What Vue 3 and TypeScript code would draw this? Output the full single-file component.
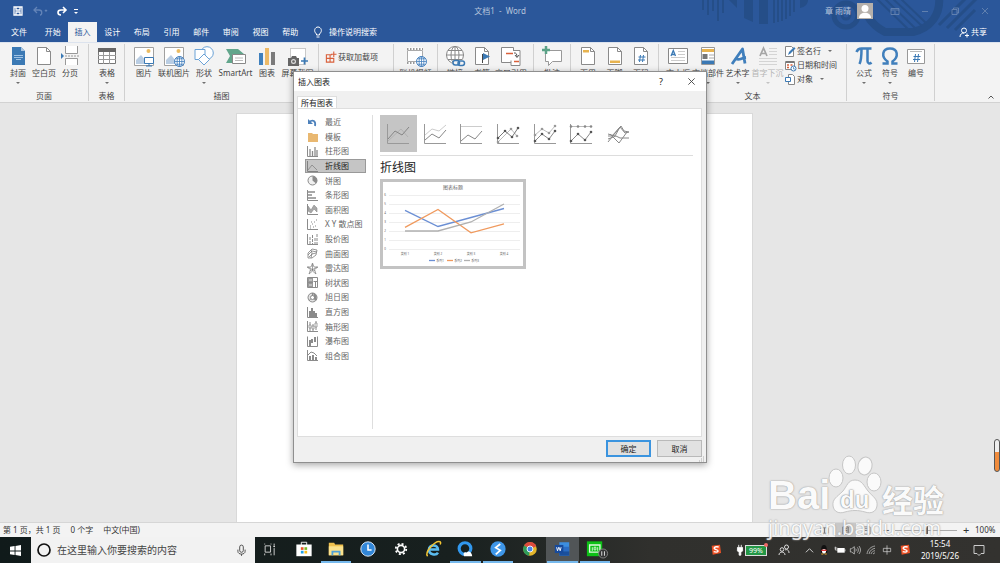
<script setup lang="ts">
import { ref } from 'vue'

interface Tool {
  icon: string
  label: string
  width: number
  arrow?: boolean
  disabled?: boolean
}
interface Group {
  width: number
  title: string
  tools: Tool[]
  kind?: 'addins' | 'text' | 'art'
}

const tabs = ['开始', '插入', '设计', '布局', '引用', '邮件', '审阅', '视图', '帮助']
const activeTab = ref('插入')

const groups: Group[] = [
  { width: 84, title: '页面', tools: [
    { icon: 'cover', label: '封面', width: 26, arrow: true },
    { icon: 'blank', label: '空白页', width: 26 },
    { icon: 'pagebreak', label: '分页', width: 26 },
  ] },
  { width: 36, title: '表格', tools: [{ icon: 'table', label: '表格', width: 36, arrow: true }] },
  { width: 194, title: '插图', kind: 'art', tools: [
    { icon: 'picture', label: '图片', width: 30 },
    { icon: 'online', label: '联机图片', width: 30 },
    { icon: 'shapes', label: '形状', width: 30, arrow: true },
    { icon: 'smartart', label: 'SmartArt', width: 33 },
    { icon: 'chart', label: '图表', width: 30 },
    { icon: 'screenshot', label: '屏幕截图', width: 31, arrow: true },
  ] },
  { width: 75, title: '加载项', kind: 'addins', tools: [] },
  { width: 44, title: '媒体', tools: [{ icon: 'video', label: '联机视频', width: 43 }] },
  { width: 96, title: '链接', tools: [
    { icon: 'link', label: '链接', width: 34 },
    { icon: 'bookmark', label: '书签', width: 20 },
    { icon: 'crossref', label: '交叉引用', width: 38 },
  ] },
  { width: 37, title: '批注', tools: [{ icon: 'comment', label: '批注', width: 36 }] },
  { width: 88, title: '页眉和页脚', tools: [
    { icon: 'header', label: '页眉', width: 26, arrow: true },
    { icon: 'footer', label: '页脚', width: 27, arrow: true },
    { icon: 'pagenum', label: '页码', width: 26, arrow: true },
  ] },
  { width: 188, title: '文本', kind: 'text', tools: [
    { icon: 'textbox', label: '文本框', width: 30, arrow: true },
    { icon: 'parts', label: '文档部件', width: 30, arrow: true },
    { icon: 'wordart', label: '艺术字', width: 29, arrow: true },
    { icon: 'dropcap', label: '首字下沉', width: 31, arrow: true, disabled: true },
  ] },
  { width: 88, title: '符号', tools: [
    { icon: 'pi', label: '公式', width: 26, arrow: true },
    { icon: 'omega', label: '符号', width: 26, arrow: true },
    { icon: 'number', label: '编号', width: 26 },
  ] },
]

const textTools = [
  { icon: 'sign', label: '签名行', arrow: true },
  { icon: 'date', label: '日期和时间', arrow: false },
  { icon: 'object', label: '对象', arrow: true },
]

const pageShape = '<path d="M3.500 1.500h9l4 4v13h-13z" fill="#fff" stroke="#8a8a8a"/><path d="M12.500 1.500v4h4" fill="none" stroke="#8a8a8a"/>'
const photo = '<path d="M.5 1.500h19v18H.5z" fill="#fff" stroke="#a0a0a0"/><circle cx="14.500" cy="5" r="2" fill="#ebbc62"/><path d="M2 18v-4l5-5 5 6v3z" fill="#b9cde3"/>'
const globe = '<circle cx="15.500" cy="15.500" r="5" fill="#fff" stroke="#4480be"/><path d="M10.500 15.500h10M15.500 10.500v10M11.500 12.800h8M11.500 18.200h8" stroke="#4480be" stroke-width=".8"/><ellipse cx="15.500" cy="15.500" rx="2.400" ry="5" fill="none" stroke="#4480be" stroke-width=".8"/>'

const ribbonIcons: Record<string, string> = {
  cover: '<path d="M4 1h9l4 4v14H4z" fill="#3b79b4"/><path d="M13 1v4h4z" fill="#a9c5e0"/><path d="M6 9.500h9M6 11.500h9M8 13.500h5" stroke="#9fc2e4"/>',
  blank: pageShape,
  pagebreak: '<path d="M5.500 0v7.500h12V0M5.500 19v-6.500h12V19" fill="#fff" stroke="#999"/><path d="M5 10h14" stroke="#999" stroke-dasharray="2 1"/><path d="M1 7l3 3-3 3z" fill="#3b79b4"/>',
  table: '<path d="M1.500 2.500h17v15h-17z" fill="#fff" stroke="#777"/><path d="M1 2h18v4H1z" fill="#666"/><path d="M1 9.500h18M1 13.500h18M6.500 6v12M12.500 6v12" stroke="#999"/>',
  picture: photo + '<path d="M10.500 11.500h9v6h-9z" fill="#fff" stroke="#3b79b4"/><path d="M15 18v2M12 20h6" stroke="#3b79b4"/>',
  online: photo + globe,
  shapes: '<circle cx="13" cy="7" r="6.300" fill="#fff" stroke="#6ba2d6"/><path d="M1 3.500h10v10H1z" fill="#fff" stroke="#6ba2d6"/><path d="M10 8l5.500 5.500L10 19l-5.500-5.500z" fill="#fff" stroke="#6ba2d6"/>',
  smartart: '<path d="M0 3h12l6 5-6 5v4H0l4-7z" fill="#62a68c"/><path d="M6.500 8.500h13v9h-13z" fill="#fff" stroke="#888"/><path d="M9 12h8M9 14.500h8" stroke="#bbb"/>',
  chart: '<path d="M2 7h4v12H2z" fill="#3f80bd"/><path d="M8 2h4v17H8z" fill="#edba67"/><path d="M14 6h4v13h-4z" fill="#7b7b7b"/>',
  screenshot: '<path d="M2.500 2.500h15v16h-15z" fill="#fff" stroke="#999" stroke-dasharray="1 1"/><path d="M0 12h3l1-2h4l1 2h2v8H0z" fill="#666"/><circle cx="5.500" cy="15.500" r="2.500" fill="#ddd"/><circle cx="5.500" cy="15.500" r="1.300" fill="#666"/><path d="M13 15h7M16.500 11.500v7" stroke="#3b79b4" stroke-width="1.700"/>',
  addin: '<path d="M1.500 4.500h4v4h-4zM1.500 8.500h4v4h-4zM5.500 8.500h4v4h-4zM5.500 8.500v-4h2M9.500 1v6M6.500 4h6" fill="none" stroke="#d9603b" stroke-width="1.200"/>',
  video: '<path d="M1 1.500h16v17H1z" fill="#fff"/><path d="M1.500 4.500h15v11h-15z" fill="none" stroke="#aaa"/><path d="M1 3h16M1 17h9" stroke="#777" stroke-width="1.500" stroke-dasharray="1.500 1.500"/>' + globe,
  link: '<circle cx="10" cy="9" r="8.500" fill="#fff" stroke="#888"/><ellipse cx="10" cy="9" rx="4" ry="8.500" fill="none" stroke="#888"/><path d="M1.500 9h17M10 .5v17M3 4.500h14M3 13.500h14" stroke="#888"/><path d="M8 14h12v6H8z" fill="#f3f3f3"/><rect x="8" y="14.500" width="6.500" height="4.500" rx="2.200" fill="none" stroke="#3b79b4" stroke-width="1.500"/><rect x="13" y="15" width="6.500" height="4.500" rx="2.200" fill="none" stroke="#3b79b4" stroke-width="1.500"/>',
  bookmark: pageShape + '<path d="M10.500 8v9" stroke="#444"/><path d="M11 7l7 3.500-7 3.500z" fill="#3b79b4"/>',
  crossref: '<path d="M.5 1.500h12v15H.5z" fill="#fff" stroke="#888"/><path d="M12 4.500h7v15h-9v-5" fill="#fff" stroke="#888"/><path d="M5 7.500h7M13 15.500h5" stroke="#d9603b" stroke-width="1.500"/><path d="M13 7c2-.5 3 1 3 4M14 9l2 2.500L18 9" fill="none" stroke="#555"/>',
  comment: '<path d="M3.500 4.500h16v11h-9l-4 4v-4h-3z" fill="#fff" stroke="#999"/><path d="M0 4h8M4 0v8" stroke="#5ba287" stroke-width="2.500"/>',
  header: pageShape + '<path d="M5 4h6v2.500H5z" fill="#e7b34f"/>',
  footer: pageShape + '<path d="M5 14.500h10V17H5z" fill="#e7b34f"/>',
  pagenum: pageShape + '<path d="M9.500 9l-1 7M12.500 9l-1 7M7.500 11h7M7 14h7" stroke="#3b79b4"/>',
  textbox: '<path d="M.5 2.500h19v15H.5z" fill="#fff" stroke="#888"/><path d="M3 10l2.300-5.500L7.500 10M4 8.500h3" fill="none" stroke="#3b79b4" stroke-width="1.300"/><path d="M10 5.500h7M10 8.500h7M3 11.500h14M3 14.500h14" stroke="#ccc"/>',
  parts: '<path d="M3.500 1.500h13v17h-13z" fill="#fff" stroke="#999"/><path d="M4 3h12v3H4z" fill="#e7b34f"/><path d="M4.500 8h5v5h-5z" fill="#777"/><path d="M11 9h5M11 12h5" stroke="#aaa"/><path d="M4 14.500h12V18H4z" fill="#3b79b4"/>',
  wordart: '<path d="M4 18L14.500 3l2.500 14.500M8 13c4 1.500 5-1 10-1.500" fill="none" stroke="#407fbc" stroke-width="2.800" stroke-linejoin="round"/>',
  dropcap: '<path d="M2 10l3.500-8L9 10M3.500 7.500h4" fill="none" stroke="#a5a5a5" stroke-width="1.700"/><path d="M11 2.500h8M11 5.500h8M11 8.500h8M1 12.500h18M1 15.500h18M1 18.500h18" stroke="#d4d4d4"/>',
  pi: '<path d="M2.500 6c1-3 3-3.500 5-3.500h10M7.500 3c0 7 0 11-2 15M13.500 3v12c0 3 2.500 3 4 1.500" fill="none" stroke="#407fbc" stroke-width="2.500"/>',
  omega: '<path d="M2.500 17.500h5v-2C1 11 2 2.500 10 2.500s9 8.500 2.500 13v2h5" fill="none" stroke="#407fbc" stroke-width="2.500"/>',
  number: '<path d="M1.500 3.500h17v14h-17z" fill="#fff" stroke="#999"/><path d="M4 5.500h12" stroke="#bbb"/><path d="M9.500 8l-1 8M12.500 8l-1 8M7.500 10.500h7M7 13.500h7" stroke="#3b79b4"/>',
  sign: '<path d="M.5.500h6l2 2v8h-8z" fill="#fff" stroke="#888"/><path d="M3 9l1-3 5-5 1.500 1.500-5 5z" fill="#3b79b4"/>',
  date: '<path d="M.5 1.500h9v8h-9z" fill="#fff" stroke="#888"/><path d="M1 1h8v2H1z" fill="#777"/><path d="M2 5h2M2 7.500h2M5.500 5h2" stroke="#d9603b" stroke-width="1.500"/><circle cx="8.500" cy="8.500" r="2.500" fill="#fff" stroke="#3b79b4"/><path d="M8.500 7v2H10" fill="none" stroke="#3b79b4" stroke-width=".7"/>',
  object: '<path d="M3.500.500h4l2 2v8h-6z" fill="#fff" stroke="#888"/><path d="M.5 3.500h5v4h-5z" fill="#fff" stroke="#3b79b4"/>',
}

const axes = '<path d="M.5 0v10.500H11" fill="none" stroke="#777"/>'
const chartTypes = [
  { name: '最近', art: '<path d="M2 5c4-3 7-1 6 4" fill="none" stroke="#2f6cb0" stroke-width="1.800"/><path d="M1 2v5h5z" fill="#2f6cb0"/>' },
  { name: '模板', art: '<path d="M1 2h4l1 1h5v8H1z" fill="#e5ac58"/>' },
  { name: '柱形图', art: axes + '<path d="M3 10V3M5.500 10V5M8 10V1M10 10V4" stroke="#777" stroke-width="1.300"/>' },
  { name: '折线图', art: axes + '<path d="M1 9l4-5 5 5" fill="none" stroke="#888"/>' },
  { name: '饼图', art: '<circle cx="5.500" cy="5.500" r="4.500" fill="#eee" stroke="#777"/><path d="M5.500 1v4.500l3.500 3A4.500 4.500 0 0 0 5.500 1z" fill="#777"/>' },
  { name: '条形图', art: axes + '<path d="M1 2h7M1 5h4M1 8h8" stroke="#777" stroke-width="1.700"/>' },
  { name: '面积图', art: axes + '<path d="M1 7V2l3 4 3-5 3 3v4L7 5 4 9z" fill="#999" stroke="#777" stroke-width=".6"/>' },
  { name: 'X Y 散点图', art: axes + '<path d="M3 7h1M5 5h1M7 3h1M4 3h1M8 7h1M6 8h1M9 1h1M3 9h1" stroke="#777"/>' },
  { name: '股价图', art: axes + '<path d="M3 3v7M5.500 1v9M8 4v6M10 0v10" stroke="#777" stroke-dasharray="3 1"/>' },
  { name: '曲面图', art: '<path d="M1 5l4-4 5 1-1 5-4 3H1zM1 7l4-4 5 1M2 9l3-3 4-1M4 2l1 3-1 5" fill="none" stroke="#777" stroke-width=".9"/>' },
  { name: '雷达图', art: '<path d="M5.500 0L7 4h4L7.500 6.500 9 11 5.500 8 2 11l1.500-4.500L0 4h4zM5.500 1v7M1 4l7 4M10 4L3 8" fill="none" stroke="#777" stroke-width=".8"/>' },
  { name: '树状图', art: '<path d="M.5.500h10v10H.5z" fill="#fff" stroke="#777"/><path d="M1 1h5v9H1z" fill="#888"/><path d="M6.500 4.500h4M8.500 5v5M1 5.500h5" stroke="#777"/><path d="M2 3h3M2 8h3" stroke="#ddd"/>' },
  { name: '旭日图', art: '<circle cx="5.500" cy="5.500" r="4.500" fill="#ddd" stroke="#777"/><circle cx="5.500" cy="5.500" r="2" fill="#fff" stroke="#777"/><path d="M5.500 1v3M7 6l3 2M3.500 7L2 9" stroke="#777"/><path d="M6 1a4.500 4.500 0 0 1 2 8L7 7V4z" fill="#777"/>' },
  { name: '直方图', art: axes + '<path d="M2 10V4h2V1h2v3h2v2h2v4z" fill="#777"/>' },
  { name: '箱形图', art: axes + '<path d="M3 1v9M6 3v7M9 0v9" stroke="#777"/><path d="M2 4h2v3H2zM5 5h2v3H5zM8 2h2v4H8z" fill="#fff" stroke="#777" stroke-width=".8"/>' },
  { name: '瀑布图', art: '<path d="M.5.500v10h10V.500" fill="none" stroke="#777"/><path d="M2 4h2v6H2zM4 3h2v4H4zM7 1h2v5H7z" fill="#777"/>' },
  { name: '组合图', art: axes + '<path d="M2 10V6h2v4zM5 10V5h2v5zM8 10V7h2v3z" fill="#777"/><path d="M1 5l3-3 3 1 3 3" fill="none" stroke="#777"/>' },
]
const activeType = ref('折线图')

const subAxes = '<path d="M.5 0v19.500H22" fill="none" stroke="#999"/>'
const dots = (points: number[][], fill: string) =>
  points.map(([x, y]) => `<circle cx="${x}" cy="${y}" r="1.300" fill="${fill}"/>`).join('')
const subTypes = [
  { name: '折线图', art: subAxes + '<path d="M1 17L14 5l7 8" fill="none" stroke="#b2b2b2"/><path d="M1 15l7-8 7 4 7-8" fill="none" stroke="#858585"/>' },
  { name: '堆积折线图', art: subAxes + '<path d="M1 11l7-6 7 2 7-6" fill="none" stroke="#ccc"/><path d="M1 16l7-6 7 4 7-8" fill="none" stroke="#888"/>' },
  { name: '百分比堆积折线图', art: subAxes + '<path d="M1 2.500h21" stroke="#ccc"/><path d="M1 17l7-6 7 4 7-8" fill="none" stroke="#888"/>' },
  { name: '带数据标记的折线图', art: subAxes + '<path d="M1 18L14 5l6 7" fill="none" stroke="#bbb"/><path d="M1 14l7-7 7 6 6-9" fill="none" stroke="#777"/>' + dots([[1, 18], [14, 5], [20, 12]], '#999') + dots([[1, 14], [8, 7], [15, 13], [21, 4]], '#555') },
  { name: '带标记的堆积折线图', art: subAxes + '<path d="M1 11l7-6 7 4 6-7" fill="none" stroke="#bbb"/><path d="M1 17l7-7 7 5 6-8" fill="none" stroke="#888"/>' + dots([[1, 11], [8, 5], [15, 9], [21, 2]], '#999') + dots([[1, 17], [8, 10], [15, 15], [21, 7]], '#555') },
  { name: '带标记的百分比堆积折线图', art: subAxes + '<path d="M1 2.500h20" stroke="#bbb"/><path d="M1 17l7-7 7 6 6-8" fill="none" stroke="#888"/>' + dots([[1, 2.5], [8, 2.5], [15, 2.5], [21, 2.5]], '#888') + dots([[1, 17], [8, 10], [15, 16], [21, 8]], '#555') },
  { name: '三维折线图', art: '<path d="M1 12h4L14 2l3 5 5 1M1 10l7 2 5-9 5 6 4-1M1 18L13 3M3 10l9 9 8-11M1 15l8-3 4 2h9" fill="none" stroke="#888"/>' },
]
const activeSub = ref(0)

const gridLines = [6, 5, 4, 3, 2, 1, 0].map((value, i) => ({ value, y: 14 + i * 9 }))
const categories = ['类别 1', '类别 2', '类别 3', '类别 4'].map((name, i) => ({ name, x: 23 + i * 33 }))
const toPoints = (values: number[]) => values.map((v, i) => `${23 + i * 33},${68 - v * 9}`).join(' ')
const series = [
  { name: '系列1', color: '#6b8fd4', points: toPoints([4.3, 2.5, 3.5, 4.5]), x: 47 },
  { name: '系列2', color: '#f09a5e', points: toPoints([2.4, 4.4, 1.8, 2.8]), x: 65 },
  { name: '系列3', color: '#b0b0b0', points: toPoints([2, 2, 3, 5]), x: 82 },
]

const winApps = [
  { name: '任务视图', art: '<path d="M3.500 6.500h6v7h-6zM3 4v1M10 4v1M3 15v2M10 15v2M13.500 4v2M13.500 9v8" fill="none" stroke="#ddd"/><circle cx="13.500" cy="7" r="1" fill="#ddd"/>' },
  { name: '应用商店', art: '<path d="M7 6V2.500h6V6" fill="none" stroke="#fff"/><path d="M1.500 5h17v13h-17z" fill="#fff"/><path d="M6.500 8h3v3h-3z" fill="#e8562a"/><path d="M10.500 8h3v3h-3z" fill="#79b928"/><path d="M6.500 12h3v3h-3z" fill="#1e9fe8"/><path d="M10.500 12h3v3h-3z" fill="#f8bc19"/>' },
  { name: '文件资源管理器', open: true, art: '<path d="M2 3h6l1 2h9v12H2z" fill="#f0c14e"/><path d="M2 7h16v10H2z" fill="#fbe28d"/><path d="M5 17v-5h10v5h-2v-3H7v3z" fill="#4da0d8"/>' },
  { name: '时钟', art: '<circle cx="10" cy="10" r="8" fill="#3287d8" stroke="#e6f2ff"/><path d="M10 5v6h4" fill="none" stroke="#fff" stroke-width="1.700"/>' },
  { name: '设置', art: '<circle cx="10" cy="10" r="4" fill="none" stroke="#fff" stroke-width="1.800"/><circle cx="10" cy="10" r="5.800" fill="none" stroke="#fff" stroke-width="2" stroke-dasharray="2.250 2.300"/>' },
  { name: 'Internet Explorer', art: '<path d="M15.500 14c-2 3.500-10 2.500-10-3.500s10-6 10 0h-9" fill="none" stroke="#5bbcf0" stroke-width="2.800"/><path d="M4 18C0 14 13-.5 18 2c1 .7.500 2 0 3" fill="none" stroke="#f5c632" stroke-width="1.700"/>' },
  { name: 'QQ 浏览器', open: true, art: '<circle cx="10" cy="9.500" r="6.500" fill="#16201f" stroke="#3198ee" stroke-width="3.500"/><path d="M9 18c-2-5 2-5 3-4 2-3 6 0 6 4z" fill="#fff"/>' },
  { name: '迅雷', open: true, art: '<circle cx="10" cy="10" r="8.500" fill="#3e96e8"/><path d="M12.500 4.500L7.500 8.500l5 3-5 4.500" fill="none" stroke="#fff" stroke-width="2"/>' },
  { name: 'Chrome', art: '<circle cx="10" cy="10" r="7.500" fill="#e3b52b"/><path d="M10 10L3.500 6.200A7.500 7.500 0 0 1 17 7z" fill="#dd4b3e"/><path d="M10 10L3.500 6.200A7.500 7.500 0 0 0 9 17.500z" fill="#2f9c5a"/><circle cx="10" cy="10" r="3.300" fill="#4685e8" stroke="#fff"/>' },
  { name: 'Word', open: true, active: true, art: '<path d="M7 2.500h11v15H7z" fill="#3c8ee0"/><path d="M7 7.500h11v5H7z" fill="#2b6dc5"/><path d="M7 12.500h11v5H7z" fill="#1b4f9b"/><path d="M2 5.500h9.500v9H2z" fill="#174a9c"/><path d="M4 8l1 4 1.500-4L8 12l1-4" fill="none" stroke="#fff" stroke-width="1"/>' },
  { name: '爱奇艺', open: true, art: '<path d="M1 1.500h17v16.500H1z" fill="#0dc116"/><path d="M4 5.500h11.500v8H4z" fill="none" stroke="#dff8df" stroke-width="1.500"/><path d="M7 8v4M9 8h2v3H9zM13 8v4" fill="none" stroke="#dff8df"/><circle cx="19" cy="15" r="5" fill="#333" stroke="#888"/><path d="M17.500 12.500v5M20.500 12.500v5" stroke="#eee"/>' },
]
const sogou = '<path d="M2.500 2.500L15 1l1.500 12.500L4 16z" fill="#ee5226"/><path d="M13 4.500C6 3 4 7 9 8.300s4 5-3.500 3.200" fill="none" stroke="#fff" stroke-width="2"/>'
const tray = [
  { name: 'QQ', width: 16, art: '<ellipse cx="9" cy="7" rx="4" ry="5.500" fill="#111"/><ellipse cx="9" cy="10" rx="5" ry="4.500" fill="#111"/><ellipse cx="9" cy="11" rx="3" ry="3.500" fill="#fff"/><path d="M5 8.500h8v2H5z" fill="#df3535"/><path d="M5 15h3M10 15h3" stroke="#f5ae28" stroke-width="1.500"/>' },
  { name: '电源', width: 15, art: '<path d="M5 6h11v7H5z" fill="#fff"/><path d="M2 4v5h4M1 6h4M16.500 8v3" fill="none" stroke="#fff"/>' },
  { name: '音量', width: 16, art: '<path d="M2 7h2l4-3v11l-4-3H2z" fill="none" stroke="#ddd"/><path d="M10 7c1 1 1 3 0 4M12.500 5c2 2 2 6 0 8M15 3c3 4 3 8 0 12" fill="none" stroke="#ddd"/>' },
  { name: '网络', width: 16, art: '<path d="M3 15C4 8 9 4 15 3M6 15c1-5 5-8 9-8.500M9 15c1-3 3-4.500 6-5M12 15l3-2" fill="none" stroke="#bbb" stroke-width="1.200"/>' },
  { name: '输入法', width: 15, art: '<path d="M3.500 6.500h11v5h-11zM9 2v14" fill="none" stroke="#ddd"/>' },
]
</script>

<template>
  <div class="desktop">
    <header class="titlebar">
      <svg class="art" viewBox="0 0 310 42" aria-hidden="true">
        <g fill="none" stroke="#254e88" stroke-width="2">
          <path d="M13 0v10M18 0v15M23 0v11M28 0v21M33 0v13" />
          <path d="M39 0h8v8zM54 0h9v22l-9-4zM69 0h9v24h-9z" fill="#254e88" stroke="none" />
          <path d="M84 0v23M88 0v22M92 0v21M96 0v19M100 0v16M104 0v12" />
          <path d="M110 0h8c0 4-3 7-8 8z" fill="#254e88" stroke="none" />
          <circle cx="156" cy="15" r="12" stroke-width="5" />
          <circle cx="156" cy="15" r="4" stroke-width="3" />
          <path d="M249-4c2 18-8 32-26 36h-28c-8-4-14-10-18-17" stroke-width="8" />
          <path d="M186-2l33 32M194-2l32 31M202-2l30 28M210-2l26 25" />
          <path d="M249 25L277-3M257 28l30-30M265 30l20-20" stroke-width="3" />
        </g>
      </svg>
      <div class="caption">
        <div class="quick">
          <button type="button" aria-label="保存"><svg viewBox="0 0 10 10"><path d="M1 1h8v8H1zM3 1v3h4V1M3 9V6h4v3" fill="none" stroke="#fff" stroke-width="1.300" /></svg></button>
          <button type="button" class="dim" aria-label="撤消"><svg viewBox="0 0 14 10"><path d="M4 1L1 4l3 3M1 4h5c4 0 3 5 1 5M12 4l1 1 1-1" fill="none" stroke="#6384b8" stroke-width="1.300" /></svg></button>
          <button type="button" aria-label="恢复"><svg viewBox="0 0 10 10"><path d="M6 1l3 3-3 3M9 4H4C0 4 0 9 4 9" fill="none" stroke="#fff" stroke-width="1.600" /></svg></button>
          <button type="button" class="custom" aria-label="自定义快速访问工具栏"><svg viewBox="0 0 10 10"><path d="M3 3.500h4" stroke="#fff" /><path d="M3 6h4L5 8z" fill="#fff" /></svg></button>
        </div>
        <h1>文档1 &nbsp;- &nbsp;Word</h1>
        <div class="account">
          <span>章 雨晴</span>
          <svg class="avatar" viewBox="0 0 16 16"><path d="M0 0h16v16H0z" fill="#b5b0ab" /><circle cx="8" cy="5.500" r="3.500" fill="#fff" /><path d="M2 15c0-7 12-7 12 0z" fill="#fff" /></svg>
          <div class="winbuttons">
            <button type="button" aria-label="功能区显示选项"><svg viewBox="0 0 10 10"><path d="M1 2.500h8v6H1zM1 4h8M5 5v3" fill="none" stroke="#6f8ab5" stroke-width=".8" /></svg></button>
            <button type="button" aria-label="最小化"><svg viewBox="0 0 10 10"><path d="M2 5.500h6" stroke="#6f8ab5" stroke-width=".8" /></svg></button>
            <button type="button" aria-label="还原"><svg viewBox="0 0 10 10"><path d="M2 3.500h5v5H2zM3.500 3V2h5v5H7" fill="none" stroke="#6f8ab5" stroke-width=".8" /></svg></button>
            <button type="button" aria-label="关闭"><svg viewBox="0 0 10 10"><path d="M2 2l6 6M8 2L2 8" stroke="#6f8ab5" stroke-width=".8" /></svg></button>
          </div>
        </div>
      </div>
      <nav class="tabrow">
        <button type="button" class="file">文件</button>
        <div class="tabs">
          <button v-for="tab in tabs" :key="tab" type="button" :class="{ on: tab === activeTab }" @click="activeTab = tab">{{ tab }}</button>
        </div>
        <button type="button" class="tell">
          <svg viewBox="0 0 10 12"><path d="M3.500 8C0 5 2 1 5 1s5 4 1.500 7v1h-3zM3.500 11h3" fill="none" stroke="#fff" /></svg>
          操作说明搜索
        </button>
        <button type="button" class="share">
          <svg viewBox="0 0 10 10"><circle cx="5" cy="3.500" r="2.500" fill="none" stroke="#fff" /><path d="M1 10c0-3 2-4 4-4M6 8.500h4M8 6.500v4" fill="none" stroke="#fff" /></svg>
          共享
        </button>
      </nav>
    </header>

    <section class="ribbon">
      <div v-for="group in groups" :key="group.title" class="group" :class="group.kind" :style="{ width: group.width + 'px' }">
        <div class="tools">
          <button v-for="tool in group.tools" :key="tool.label" type="button" class="tool" :class="{ off: tool.disabled }" :disabled="tool.disabled" :style="{ width: tool.width + 'px' }">
            <svg class="glyph" viewBox="0 0 20 20" v-html="ribbonIcons[tool.icon]"></svg>
            <span>{{ tool.label }}</span>
            <i v-if="tool.arrow" class="caret"></i>
          </button>
          <button v-if="group.kind === 'addins'" type="button" class="addin">
            <svg viewBox="0 0 13 14" v-html="ribbonIcons.addin"></svg>获取加载项
          </button>
          <div v-if="group.kind === 'text'" class="stack">
            <button v-for="tool in textTools" :key="tool.label" type="button">
              <svg viewBox="0 0 11 11" v-html="ribbonIcons[tool.icon]"></svg>{{ tool.label }}<i v-if="tool.arrow" class="caret"></i>
            </button>
          </div>
        </div>
        <div class="title">{{ group.title }}</div>
      </div>
      <button type="button" class="collapse" aria-label="折叠功能区"><svg viewBox="0 0 8 8"><path d="M1.500 5.500L4 3l2.500 2.500" fill="none" stroke="#555" /></svg></button>
    </section>

    <main class="workspace"><div class="paper"></div></main>

    <footer class="status">
      <span>第 1 页，共 1 页</span><span>0 个字</span><span>中文(中国)</span>
      <div class="views">
        <button type="button" aria-label="阅读视图"><svg viewBox="0 0 10 10"><path d="M1 2h4v6H1zM5 2h4v6H5z" fill="none" stroke="#777" /></svg></button>
        <button type="button" class="on" aria-label="页面视图"><svg viewBox="0 0 10 10"><path d="M2 1h6v8H2zM3 3h4M3 5h4M3 7h4" fill="none" stroke="#666" /></svg></button>
        <button type="button" aria-label="Web 版式视图"><svg viewBox="0 0 10 10"><path d="M1 1h8v8H1zM3 3h4M3 5h4" fill="none" stroke="#777" /></svg></button>
      </div>
      <button type="button" class="zoom" aria-label="缩小">−</button>
      <input type="range" min="10" max="190" value="100" aria-label="缩放">
      <button type="button" class="zoom" aria-label="放大">+</button>
      <span class="percent">100%</span>
    </footer>

    <div class="taskbar">
      <button type="button" class="start" aria-label="开始菜单"><svg viewBox="0 0 12 12"><path d="M0 2l5-1v5H0zM6 1l6-1v6H6zM0 7h5v4l-5-1zM6 7h6v5l-6-1z" fill="#fff" /></svg></button>
      <label class="search">
        <svg class="ring" viewBox="0 0 14 14"><circle cx="7" cy="7" r="6" fill="none" stroke="#111" stroke-width="1.700" /></svg>
        <input type="text" placeholder="在这里输入你要搜索的内容" aria-label="搜索">
        <svg class="mic" viewBox="0 0 10 14"><rect x="3" y="1" width="4" height="8" rx="2" fill="none" stroke="#444" /><path d="M1 6v2c0 4 8 4 8 0V6M5 11v2" fill="none" stroke="#444" /></svg>
      </label>
      <div class="apps">
        <button v-for="app in winApps" :key="app.name" type="button" :class="{ open: app.open, active: app.active }" :aria-label="app.name"><svg viewBox="0 0 20 20" v-html="app.art"></svg></button>
      </div>
      <div class="tray">
        <button type="button" class="sogou" aria-label="搜狗输入法"><svg viewBox="0 0 18 18" v-html="sogou"></svg></button>
        <div class="charge">
          <svg viewBox="0 0 8 14"><path d="M1 4h6v4L5 10v3H3v-3L1 8zM2.500 1v3M5.500 1v3" fill="#fff" stroke="#fff" /></svg>
          <span>99%</span>
        </div>
        <button type="button" class="people" aria-label="人脉"><svg viewBox="0 0 12 12"><circle cx="8.500" cy="3" r="2" fill="none" stroke="#ddd" /><circle cx="4" cy="5.500" r="1.800" fill="none" stroke="#ddd" /><path d="M1 11c0-4 6-4 6 0M7 6c2-1 4 0 4 3" fill="none" stroke="#ddd" /></svg></button>
        <button type="button" class="more" aria-label="显示隐藏的图标"><svg viewBox="0 0 10 10"><path d="M1 7l4-4 4 4" fill="none" stroke="#ddd" /></svg></button>
        <button v-for="item in tray" :key="item.name" type="button" :style="{ width: item.width + 'px' }" :aria-label="item.name"><svg viewBox="0 0 18 18" v-html="item.art"></svg></button>
        <button type="button" class="ime" aria-label="搜狗拼音"><svg viewBox="0 0 18 18" v-html="sogou"></svg></button>
        <div class="clock"><span>15:54</span><span>2019/5/26</span></div>
        <button type="button" class="notice" aria-label="操作中心"><svg viewBox="0 0 12 12"><path d="M1 1.500h10v8H8l-2 2-2-2H1z" fill="none" stroke="#ccc" /></svg></button>
      </div>
    </div>

    <section class="dialog" role="dialog" aria-label="插入图表">
      <div class="dialog-title">
        <h2>插入图表</h2>
        <button type="button" aria-label="帮助信息">?</button>
        <button type="button" aria-label="关闭对话框"><svg viewBox="0 0 10 10"><path d="M1.500 1.500l7 7M8.500 1.500l-7 7" stroke="#444" /></svg></button>
      </div>
      <div class="dialog-tab"><button type="button">所有图表</button></div>
      <div class="panel">
        <div class="types">
          <button v-for="type in chartTypes" :key="type.name" type="button" :class="{ on: type.name === activeType }" @click="activeType = type.name">
            <svg viewBox="0 0 11 11" v-html="type.art"></svg>{{ type.name }}
          </button>
        </div>
        <div class="detail">
          <div class="subtypes">
            <button v-for="(sub, i) in subTypes" :key="sub.name" type="button" :class="{ on: i === activeSub }" :aria-label="sub.name" @click="activeSub = i"><svg viewBox="0 0 22 20" v-html="sub.art"></svg></button>
          </div>
          <h3>{{ activeType }}</h3>
          <button type="button" class="preview" aria-label="图表预览">
            <svg viewBox="0 0 142 86">
              <text x="71" y="8" class="chart-title">图表标题</text>
              <g v-for="line in gridLines" :key="line.value">
                <path :d="`M7 ${line.y}.5H138`" stroke="#eee" stroke-width="1" />
                <text x="3" :y="line.y + 1">{{ line.value }}</text>
              </g>
              <text v-for="cat in categories" :key="cat.name" :x="cat.x" y="74">{{ cat.name }}</text>
              <g v-for="s in series" :key="s.name">
                <polyline :points="s.points" :stroke="s.color" fill="none" stroke-width="1.300" />
                <path :d="`M${s.x} 79.500h6`" :stroke="s.color" stroke-width="1.300" />
                <text :x="s.x + 11" y="81">{{ s.name }}</text>
              </g>
            </svg>
          </button>
        </div>
      </div>
      <div class="actions">
        <button type="button" class="primary">确定</button>
        <button type="button">取消</button>
      </div>
      <svg class="grip" viewBox="0 0 8 8" aria-hidden="true"><path d="M1 7h1M3 7h1M5 7h1M3 5h1M5 5h1M5 3h1" stroke="#aaa" /></svg>
    </section>

    <div class="gauge"></div>

    <div class="watermark">
      <div class="brand">
        <span class="latin">Bai</span>
        <span class="paw">
          <svg viewBox="0 0 54 60" aria-hidden="true"><g fill="#fafafa" stroke="#c6c6c6"><ellipse cx="8" cy="23" rx="7" ry="9" /><ellipse cx="21" cy="10" rx="6.500" ry="9" /><ellipse cx="37" cy="11" rx="7" ry="9" transform="rotate(12 37 11)" /><ellipse cx="46" cy="27" rx="7" ry="9" /><path d="M27 25c-7 0-8 6-12 11C9 42 4 44 5 51c1 6 6 8 12 6 7-2 13-2 20 0 6 2 11 0 12-6 1-7-4-9-9-15-4-5-6-11-13-11z" /></g></svg>
          <b>du</b>
        </span>
        <span class="han">经验</span>
      </div>
      <div class="url">jingyan.baidu.com</div>
    </div>
  </div>
</template>

<style>
body { margin: 0; }
</style>

<style scoped>
.desktop {
  position: relative;
  display: flex;
  flex-direction: column;
  height: 100vh;
  overflow: hidden;
  font: 8px/10px "Noto Sans", "Noto Sans CJK SC", sans-serif;
  color: #333;
  background: #e6e6e6;
}
.desktop *, .desktop *::before { box-sizing: border-box; }
button { padding: 0; border: 0; background: none; font: inherit; color: inherit; white-space: nowrap; }
h1, h2, h3 { margin: 0; font-weight: 400; }
svg { display: block; flex: none; overflow: visible; }

.titlebar { position: relative; background: #2b579a; color: #fff; overflow: hidden; flex: none; }
.art { position: absolute; right: 0; top: 0; width: 310px; height: 42px; overflow: hidden; }
.caption { position: relative; display: grid; grid-template-columns: 1fr auto 1fr; align-items: center; height: 22px; }
.quick { display: flex; align-items: center; gap: 10px; padding-left: 13px; }
.quick svg { width: auto; height: 10px; }
.quick .custom { margin-left: -6px; }
h1 { font-size: 8px; color: #b6c5dc; }
.account { display: flex; justify-content: flex-end; align-items: center; color: #b9c7dd; }
.avatar { width: 16px; height: 16px; margin-left: 6px; }
.winbuttons { display: flex; margin-left: 7px; }
.winbuttons button { width: 30px; display: flex; justify-content: center; }
.winbuttons svg { width: 10px; height: 10px; }
.tabrow { position: relative; display: flex; height: 20px; }
.file { width: 38px; }
.tabs { display: flex; width: 267px; }
.tabs button { flex: 1; }
.tabs .on { background: #f3f3f3; color: #2b579a; }
.tell, .share { display: flex; align-items: center; gap: 6px; padding-left: 8px; }
.tell svg { width: 10px; height: 12px; }
.share { margin-left: auto; padding-right: 13px; gap: 2px; }
.share svg { width: 10px; height: 10px; }

.ribbon { display: flex; flex: none; height: 61px; padding-left: 5px; background: #f3f3f3; border-top: 1px solid #dce3ee; border-bottom: 1px solid #d2d2d2; color: #444; }
.group { flex: none; display: flex; flex-direction: column; margin: 1px 0; border-right: 1px solid #d0d0d0; }
.group:first-child { padding-right: 5px; }
.tools { flex: 1; display: flex; padding-top: 2px; }
.group:nth-child(n+8) .tools, .art .tools { padding-left: 4px; }
.group.art { position: static; height: auto; overflow: visible; }
.tool { flex: none; display: flex; flex-direction: column; align-items: center; }
.tool.off { color: #b3b3b3; }
.glyph { width: 20px; height: 20px; margin-bottom: 2px; }
.caret { width: 0; height: 0; margin-top: 4px; border: 2px solid transparent; border-top-color: currentColor; border-bottom: 0; opacity: .75; }
.title { text-align: center; }
.addin { display: flex; align-items: center; align-self: flex-start; gap: 1px; height: 22px; padding-left: 6px; }
.addin svg { width: 12px; height: 14px; }
.stack { display: flex; flex-direction: column; margin-top: -2px; padding-left: 2px; }
.stack button { display: flex; align-items: center; gap: 1px; height: 14px; }
.stack svg { width: 11px; height: 11px; }
.stack .caret { margin: 0 0 0 6px; }
.collapse { margin: auto 5px 1px auto; }
.collapse svg { width: 8px; height: 8px; }

.workspace { flex: 1; display: flex; justify-content: center; padding: 10px 11px 0 0; background: #e6e6e6; }
.paper { width: 52.2%; background: #fff; border: 1px solid #d9d9d9; border-bottom: 0; }

.status { flex: none; display: flex; align-items: center; height: 15px; padding: 0 5px 0 3px; gap: 10px; background: #f3f3f3; border-top: 1px solid #d6d6d6; }
.views { display: flex; margin-left: auto; align-self: stretch; }
.views button { width: 21px; display: flex; justify-content: center; align-items: center; }
.views .on { background: #c8c8c8; }
.views svg { width: 9px; height: 9px; }
.zoom { width: 6px; margin: 0 -4px; font-size: 11px; }
.status input { appearance: none; width: 62px; height: 1px; margin: 0; background: #aaa; }
.status input::-webkit-slider-thumb { appearance: none; width: 3px; height: 8px; background: #555; }
.percent { width: 20px; }

.taskbar { flex: none; display: flex; height: 26px; background: linear-gradient(90deg, #101a1a 0%, #18201f 45%, #30302d 65%, #33322f 100%); color: #fff; }
.start { width: 31px; display: flex; align-items: center; justify-content: center; }
.start svg { width: 11px; height: 11px; }
.search { display: flex; align-items: center; width: 224px; padding: 0 9px 0 6px; gap: 6px; background: #f2f2f2; }
.ring { width: 14px; height: 14px; }
.search input { flex: 1; min-width: 0; padding: 0; border: 0; outline: 0; background: none; font: 10px/14px "Noto Sans", "Noto Sans CJK SC", sans-serif; }
.search input::placeholder { color: #444; opacity: 1; }
.mic { width: 9px; height: 13px; }
.apps { display: flex; width: 356px; }
.apps button { flex: 1; display: flex; justify-content: center; align-items: center; border-bottom: 2px solid transparent; }
.apps .open { border-image: linear-gradient(90deg, transparent 9%, #76b9ed 9%, #76b9ed 91%, transparent 91%) 2; border-top: 0; }
.apps .active { background: #515557; }
.apps svg { width: 18px; height: 18px; }
.tray { display: flex; align-items: center; margin-left: auto; }
.tray button { display: flex; justify-content: center; }
.tray svg { width: 12px; height: 12px; }
.charge { display: flex; align-items: center; gap: 1px; width: 32px; margin-left: 14px; }
.charge svg { width: 8px; height: 12px; }
.charge span { position: relative; width: 22px; border: 1px solid #ddd; background: #239645; text-align: center; font-size: 7px; line-height: 9px; }
.charge span::before { content: ""; position: absolute; right: -2px; top: -3px; width: 4px; height: 4px; border-radius: 50%; background: #f06b68; }
.people { margin: 0 12px 0 10px; }
.tray .more { width: 14px; }
.tray .more svg { width: 9px; height: 9px; }
.ime { margin-left: 5px; }
.clock { display: flex; flex-direction: column; align-items: center; width: 48px; margin-left: 5px; line-height: 12px; }
.notice { margin: 0 15px 0 9px; }

.dialog { position: absolute; top: 71px; left: 50%; width: 414px; margin-left: -207px; display: flex; flex-direction: column; border: 1px solid #8f8f8f; background: #f0f0f0; box-shadow: 0 2px 7px rgba(0, 0, 0, .35); color: #222; }
.dialog-title { display: flex; align-items: center; height: 19px; padding: 0 5px 0 4px; background: #fff; }
h2 { flex: 1; font-size: 8px; }
.dialog-title button { width: 20px; display: flex; justify-content: center; font-size: 9px; margin-left: 10px; }
.dialog-title svg { width: 9px; height: 9px; }
.dialog-tab { display: flex; padding: 5px 3px 0; }
.dialog-tab button { width: 40px; height: 12px; background: #fff; border: 1px solid #dedede; border-bottom: 0; }
.panel { display: flex; margin: 0 4px 0 3px; padding: 6px 8px 7px 7px; background: #fff; border: 1px solid #dedede; }
.types { display: flex; flex-direction: column; width: 68px; height: 314px; padding: 0 6px 66px 0; border-right: 1px solid #dedede; color: #666; }
.types button { flex: 1; display: flex; align-items: center; gap: 7px; padding-left: 1px; border: 1px solid transparent; }
.types .on { background: #c5c5c5; border-color: #999; color: #222; }
.types svg { width: 11px; height: 11px; opacity: .85; }
.detail { flex: 1; padding-left: 7px; }
.subtypes { display: flex; padding: 0 57px 3px 0; border-bottom: 1px solid #ddd; }
.subtypes button { flex: 1; height: 37px; display: flex; justify-content: center; align-items: center; }
.subtypes .on { background: #c5c5c5; }
.subtypes svg { width: 22px; height: 20px; }
h3 { margin: 4px 0 3px; font-size: 12px; line-height: 16px; }
.preview { display: block; border: 2px solid #c3c3c3; outline: 1px solid #c3c3c3; outline-offset: -3px; background: #fff; }
.preview svg { width: 142px; height: 86px; }
.preview text { font-size: 3px; text-anchor: middle; fill: #666; }
.preview .chart-title { font-size: 5px; }
.actions { display: flex; justify-content: flex-end; gap: 6px; padding: 3px 4px 5px; }
.actions button { width: 45px; height: 17px; background: #e1e1e1; border: 1px solid #b9b9b9; }
.actions .primary { border: 2px solid #3b94df; }
.grip { position: absolute; right: 0; bottom: 0; width: 8px; height: 8px; }

.gauge { position: absolute; right: 0; top: 439px; width: 6px; height: 33px; border: 1px solid #555; border-radius: 3px; background: linear-gradient(#eee 40%, #f08b3c 40%); }

.watermark { position: absolute; right: 54px; bottom: 22px; width: 178px; color: #fafafa; text-shadow: 0 0 1px #999, 0 0 2px #aaa; pointer-events: none; }
.brand { display: flex; align-items: flex-end; height: 58px; }
.latin { width: 60px; font: 700 40px/40px "Liberation Sans", sans-serif; }
.paw { position: relative; width: 54px; }
.paw svg { width: 54px; height: 60px; }
.paw b { position: absolute; left: 12px; bottom: 3px; font: 700 24px/24px "Liberation Sans", sans-serif; color: #fafafa; text-shadow: 0 0 2px #777, 0 0 1px #999; }
.han { font: 700 31px/32px "Noto Sans CJK SC", sans-serif; }
.url { font-size: 20px; line-height: 26px; opacity: .9; }
</style>
